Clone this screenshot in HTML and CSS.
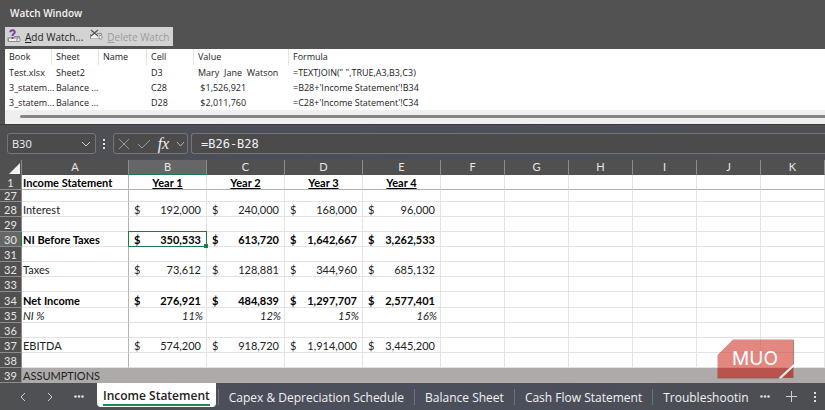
FILE: index.html
```html
<!DOCTYPE html>
<html lang="en">

<head>
  <meta charset="UTF-8" />
  <meta name="viewport" content="width=device-width, initial-scale=1.0" />
  <title>Income Statement</title>
  <link rel="stylesheet" href="styles.css">
</head>

<body>
  <section class="watch-window">
    <h1>Watch Window</h1>

    <div class="watch-toolbar">
      <button type="button" class="tool-button">
        <svg class="tool-icon" width="15" height="14" viewBox="0 0 15 14" fill="none">
          <path d="M1 8.500V12.500H10M7 7.500H12.500V9" stroke="#8a8a8a" />
          <rect x="1.500" y="9" width="9" height="3.500" fill="#f0f0f0" stroke="#8a8a8a" />
          <rect x="10" y="9" width="3" height="3.500" rx="1" fill="#f0f0f0" stroke="#8a8a8a" />
          <path d="M3.300 3.200C3.300 1.600 4.400 1.200 5.500 1.200C6.800 1.200 7.700 2 7.700 3.200C7.700 4.800 5.500 5 5.500 7" stroke="#7c3fa0" stroke-width="2" />
          <rect x="4.500" y="8" width="2" height="2" fill="#7c3fa0" />
        </svg>
        <span><u>A</u>dd Watch...</span>
      </button>
      <button type="button" class="tool-button" disabled>
        <svg class="tool-icon" width="15" height="14" viewBox="0 0 15 14" fill="none">
          <path d="M1.500 5V9.500H10M8 4.500H12.500V6" stroke="#8a8a8a" />
          <rect x="2" y="6" width="8" height="3.500" fill="#eee" />
          <rect x="10" y="6.500" width="3" height="3.500" rx="1" fill="#eee" stroke="#8a8a8a" />
          <path d="M2 1L9 7M9 1L2 7" stroke="#555" stroke-width="1.200" />
        </svg>
        <span><u>D</u>elete Watch</span>
      </button>
    </div>

    <div class="watch-list">
      <table class="watch-table">
        <colgroup>
          <col class="w-book">
          <col class="w-book">
          <col class="w-cell">
          <col class="w-book">
          <col class="w-value">
          <col>
        </colgroup>
        <thead>
          <tr>
            <th>Book</th>
            <th>Sheet</th>
            <th>Name</th>
            <th>Cell</th>
            <th>Value</th>
            <th>Formula</th>
          </tr>
        </thead>
        <tbody>
          <tr>
            <td>Test.xlsx</td>
            <td>Sheet2</td>
            <td></td>
            <td>D3</td>
            <td>Mary&nbsp; Jane&nbsp; Watson</td>
            <td>=TEXTJOIN(" ",TRUE,A3,B3,C3)</td>
          </tr>
          <tr>
            <td>3_statem...</td>
            <td>Balance ...</td>
            <td></td>
            <td>C28</td>
            <td>&nbsp;$1,526,921</td>
            <td>=B28+'Income Statement'!B34</td>
          </tr>
          <tr>
            <td>3_statem...</td>
            <td>Balance ...</td>
            <td></td>
            <td>D28</td>
            <td>&nbsp;$2,011,760</td>
            <td>=C28+'Income Statement'!C34</td>
          </tr>
        </tbody>
      </table>
      <div class="scrollbar"><div class="scroll-thumb"></div></div>
    </div>
  </section>

  <div class="formula-bar">
    <div class="name-box">
      <input type="text" class="name-input" value="B30" aria-label="Name box">
      <button type="button" class="icon-button" aria-label="Show names">
        <svg width="10" height="6" viewBox="0 0 10 6" fill="none" stroke="#d0d0d0"><path d="M1 1L5 5L9 1" /></svg>
      </button>
    </div>
    <svg class="grip" width="3" height="11" viewBox="0 0 3 11" fill="#e0e0e0">
      <rect x="0" y="1" width="2" height="2" /><rect x="0" y="5" width="2" height="2" /><rect x="0" y="9" width="2" height="2" />
    </svg>
    <div class="fx-box">
      <button type="button" class="icon-button" aria-label="Cancel">
        <svg width="12" height="12" viewBox="0 0 12 12" fill="none" stroke="#999"><path d="M1 1L11 11M11 1L1 11" /></svg>
      </button>
      <button type="button" class="icon-button" aria-label="Enter">
        <svg width="14" height="12" viewBox="0 0 14 12" fill="none" stroke="#999"><path d="M1 6L5 10L13 2" /></svg>
      </button>
      <button type="button" class="icon-button fx" aria-label="Insert function">fx</button>
      <button type="button" class="icon-button" aria-label="More functions">
        <svg width="9" height="6" viewBox="0 0 9 6" fill="none" stroke="#b8b8b8"><path d="M1 1L4.500 5L8 1" /></svg>
      </button>
    </div>
    <input type="text" class="formula-input" value="=B26-B28" aria-label="Formula">
  </div>

  <main class="sheet">
    <table class="grid">
      <colgroup>
        <col class="c-head">
        <col class="c-label">
        <col class="c-year">
        <col class="c-year">
        <col class="c-year">
        <col class="c-year">
        <col class="c-blank">
        <col class="c-blank">
        <col class="c-blank">
        <col class="c-blank">
        <col class="c-blank">
        <col>
      </colgroup>
      <thead>
        <tr>
          <th class="corner"><svg width="11" height="11" viewBox="0 0 11 11"><path d="M11 0V11H0Z" fill="#f2f2f2" /></svg></th>
          <th>A</th>
          <th class="active">B</th>
          <th>C</th>
          <th>D</th>
          <th>E</th>
          <th>F</th>
          <th>G</th>
          <th>H</th>
          <th>I</th>
          <th>J</th>
          <th>K</th>
        </tr>
      </thead>
      <tbody>
        <tr class="years bold">
          <th>1</th><td>Income Statement</td><td>Year 1</td><td>Year 2</td><td>Year 3</td><td>Year 4</td>
          <td></td><td></td><td></td><td></td><td></td><td></td>
        </tr>
        <tr class="cut">
          <th>27</th><td></td><td></td><td></td><td></td><td></td><td></td><td></td><td></td><td></td><td></td><td></td>
        </tr>
        <tr>
          <th>28</th><td>Interest</td>
          <td><div class="money"><span>$</span><span>192,000</span></div></td>
          <td><div class="money"><span>$</span><span>240,000</span></div></td>
          <td><div class="money"><span>$</span><span>168,000</span></div></td>
          <td><div class="money"><span>$</span><span>96,000</span></div></td>
          <td></td><td></td><td></td><td></td><td></td><td></td>
        </tr>
        <tr>
          <th>29</th><td></td><td></td><td></td><td></td><td></td><td></td><td></td><td></td><td></td><td></td><td></td>
        </tr>
        <tr class="bold">
          <th class="active">30</th><td>NI Before Taxes</td>
          <td class="selected"><div class="money"><span>$</span><span>350,533</span></div></td>
          <td><div class="money"><span>$</span><span>613,720</span></div></td>
          <td><div class="money"><span>$</span><span>1,642,667</span></div></td>
          <td><div class="money"><span>$</span><span>3,262,533</span></div></td>
          <td></td><td></td><td></td><td></td><td></td><td></td>
        </tr>
        <tr>
          <th>31</th><td></td><td></td><td></td><td></td><td></td><td></td><td></td><td></td><td></td><td></td><td></td>
        </tr>
        <tr>
          <th>32</th><td>Taxes</td>
          <td><div class="money"><span>$</span><span>73,612</span></div></td>
          <td><div class="money"><span>$</span><span>128,881</span></div></td>
          <td><div class="money"><span>$</span><span>344,960</span></div></td>
          <td><div class="money"><span>$</span><span>685,132</span></div></td>
          <td></td><td></td><td></td><td></td><td></td><td></td>
        </tr>
        <tr>
          <th>33</th><td></td><td></td><td></td><td></td><td></td><td></td><td></td><td></td><td></td><td></td><td></td>
        </tr>
        <tr class="bold tall">
          <th>34</th><td>Net Income</td>
          <td><div class="money"><span>$</span><span>276,921</span></div></td>
          <td><div class="money"><span>$</span><span>484,839</span></div></td>
          <td><div class="money"><span>$</span><span>1,297,707</span></div></td>
          <td><div class="money"><span>$</span><span>2,577,401</span></div></td>
          <td></td><td></td><td></td><td></td><td></td><td></td>
        </tr>
        <tr class="percent">
          <th>35</th><td>NI %</td><td>11%</td><td>12%</td><td>15%</td><td>16%</td>
          <td></td><td></td><td></td><td></td><td></td><td></td>
        </tr>
        <tr>
          <th>36</th><td></td><td></td><td></td><td></td><td></td><td></td><td></td><td></td><td></td><td></td><td></td>
        </tr>
        <tr>
          <th>37</th><td>EBITDA</td>
          <td><div class="money"><span>$</span><span>574,200</span></div></td>
          <td><div class="money"><span>$</span><span>918,720</span></div></td>
          <td><div class="money"><span>$</span><span>1,914,000</span></div></td>
          <td><div class="money"><span>$</span><span>3,445,200</span></div></td>
          <td></td><td></td><td></td><td></td><td></td><td></td>
        </tr>
        <tr>
          <th>38</th><td></td><td></td><td></td><td></td><td></td><td></td><td></td><td></td><td></td><td></td><td></td>
        </tr>
        <tr class="section">
          <th>39</th><td>ASSUMPTIONS</td><td></td><td></td><td></td><td></td><td></td><td></td><td></td><td></td><td></td><td></td>
        </tr>
      </tbody>
    </table>

    <svg class="watermark" width="78" height="40" viewBox="0 0 78 40">
      <path d="M16 0.500H76.500V25L61 39H0.500V16Z" fill="#d4473e" fill-opacity="0.650" />
      <path d="M76.500 28V39H65Z" fill="#b03a34" fill-opacity="0.850" />
      <path d="M0.500 29H72L61 39H0.500Z" fill="#a8322c" fill-opacity="0.400" />
      <path d="M0.500 39H61L76.500 25V1" fill="none" stroke="#7a5050" stroke-opacity="0.600" />
      <path d="M63 39L77 26" stroke="#f2eded" stroke-width="2" />
      <text x="38" y="26" text-anchor="middle" class="watermark-text">MUO</text>
    </svg>
  </main>

  <nav class="tab-bar">
    <div class="tab-nav">
      <button type="button" class="icon-button" aria-label="Previous sheet">
        <svg width="6" height="10" viewBox="0 0 6 10" fill="none" stroke="#d0d0d0"><path d="M5 1L1 5L5 9" /></svg>
      </button>
      <button type="button" class="icon-button" aria-label="Next sheet">
        <svg width="6" height="10" viewBox="0 0 6 10" fill="none" stroke="#d0d0d0"><path d="M1 1L5 5L1 9" /></svg>
      </button>
      <button type="button" class="icon-button" aria-label="All sheets">
        <svg width="10" height="3" viewBox="0 0 10 3" fill="#e0e0e0"><circle cx="1.500" cy="1.500" r="1.300" /><circle cx="5" cy="1.500" r="1.300" /><circle cx="8.500" cy="1.500" r="1.300" /></svg>
      </button>
    </div>
    <button type="button" class="tab current"><span>Income Statement</span></button>
    <button type="button" class="tab">Capex &amp; Depreciation Schedule</button>
    <button type="button" class="tab">Balance Sheet</button>
    <button type="button" class="tab">Cash Flow Statement</button>
    <button type="button" class="tab">Troubleshootin</button>
    <div class="tab-tools">
      <button type="button" class="icon-button" aria-label="More sheets">
        <svg width="10" height="3" viewBox="0 0 10 3" fill="#e0e0e0"><circle cx="1.500" cy="1.500" r="1.300" /><circle cx="5" cy="1.500" r="1.300" /><circle cx="8.500" cy="1.500" r="1.300" /></svg>
      </button>
      <button type="button" class="icon-button" aria-label="New sheet">
        <svg width="11" height="11" viewBox="0 0 11 11" fill="none" stroke="#d0d0d0"><path d="M5.500 0V11M0 5.500H11" /></svg>
      </button>
      <button type="button" class="icon-button" aria-label="Options">
        <svg width="3" height="11" viewBox="0 0 3 11" fill="#e0e0e0"><rect x="0" y="1" width="2" height="2" /><rect x="0" y="5" width="2" height="2" /><rect x="0" y="9" width="2" height="2" /></svg>
      </button>
    </div>
  </nav>
</body>

</html>
```

FILE: styles.css
```css
* {
  box-sizing: border-box;
}

body {
  margin: 0;
  min-height: 100vh;
  display: flex;
  flex-direction: column;
  overflow: hidden;
  background-color: #4b4e59;
  font-family: "Open Sans", "Segoe UI", sans-serif;
  color: #222;
}

button,
input {
  font: inherit;
  color: inherit;
  margin: 0;
  padding: 0;
  border: 0;
  background: none;
}

svg {
  display: block;
  flex-shrink: 0;
}

table {
  width: 100%;
  table-layout: fixed;
  border-collapse: separate;
  border-spacing: 0;
}

th,
td {
  padding: 0;
  font-weight: 400;
  text-align: left;
  white-space: nowrap;
}

/* Watch window */
.watch-window {
  background-color: #525252;
  padding-left: 5px;
  border-bottom: 1px solid #3a3b40;
}

.watch-window h1 {
  margin: 0;
  padding: 5px 5px 6px;
  font-size: 10px;
  line-height: 16px;
  font-weight: 600;
  color: #f4f4f4;
}

.watch-toolbar {
  display: inline-flex;
  gap: 6px;
  height: 19px;
  padding: 0 4px 0 2px;
  margin-bottom: 3px;
  background-color: #d3d3d3;
  vertical-align: top;
}

.tool-button {
  display: flex;
  align-items: center;
  gap: 3px;
  font-size: 10px;
  line-height: 20px;
}

.tool-icon {
  align-self: flex-start;
  margin-top: 2px;
}

.tool-button:disabled {
  color: #9c9c9c;
}

.watch-list {
  background-color: #fff;
}

.watch-table {
  font-size: 9px;
  line-height: 14px;
}

.watch-table .w-book {
  width: 47px;
}

.watch-table .w-cell {
  width: 48px;
}

.watch-table .w-value {
  width: 95px;
}

.watch-table th {
  height: 16px;
  padding-left: 4px;
  border-right: 1px solid #e4e4e4;
}

.watch-table th:last-child {
  border-right: 0;
}

.watch-table td {
  height: 15px;
  padding-left: 4px;
}

.scrollbar {
  height: 14px;
  padding: 5px 0 0 15px;
  background-color: #efefef;
}

.scroll-thumb {
  height: 3px;
  border-radius: 2px 0 0 2px;
  background-color: #858585;
}

/* Formula bar */
.formula-bar {
  display: flex;
  align-items: center;
  height: 35px;
  padding-left: 7px;
  padding-top: 2px;
  background: linear-gradient(90deg, #4f4f51, #4b4f5c 40%, #4f5054);
  color: #f2f2f2;
}

.name-box,
.fx-box,
.formula-input {
  height: 21px;
  border: 1px solid #757575;
  border-radius: 3px;
  background-color: #4b4b4b;
}

.name-box {
  display: flex;
  align-items: center;
  width: 89px;
  padding: 0 4px;
}

.name-input {
  flex: 1;
  min-width: 0;
  font-size: 11px;
}

.icon-button {
  display: flex;
  align-items: center;
  justify-content: center;
}

.grip {
  margin: 0 7px;
}

.fx-box {
  display: flex;
  align-items: center;
  justify-content: space-between;
  width: 75px;
  padding: 0 2px 0 4px;
}

.fx {
  font-family: "Liberation Serif", serif;
  font-size: 16px;
  font-style: italic;
  line-height: 16px;
}

.formula-input {
  flex: 1;
  min-width: 0;
  margin-left: 3px;
  padding-left: 9px;
  border-right: 0;
  border-radius: 3px 0 0 3px;
  font-family: "DejaVu Sans Mono", monospace;
  font-size: 12px;
}

/* Spreadsheet */
.sheet {
  position: relative;
  background-color: #fff;
}

.grid {
  font-family: Lato, Calibri, sans-serif;
  font-size: 11px;
  line-height: 14px;
}

.c-head {
  width: 22px;
}

.c-label {
  width: 107px;
}

.c-year {
  width: 78px;
}

.c-blank {
  width: 64px;
}

.grid th {
  height: 15px;
  background-color: #505050;
  color: #e6e6e6;
  text-align: center;
  border-right: 1px solid #8c8c8c;
  border-bottom: 1px solid #8c8c8c;
}

.grid thead th {
  border-bottom-color: #505050;
}

.grid .corner svg {
  margin: 2px 0 0 9px;
}

.grid th.active {
  background-color: #666;
}

.grid thead th.active {
  border-bottom-color: #1f7a45;
}

.grid tbody th.active {
  border-right-color: #1f7a45;
}

.grid td {
  height: 15px;
  border-right: 1px solid #e3e3e3;
  border-bottom: 1px solid #e3e3e3;
}

/* text sits on the bottom edge of the row */
.grid tbody th,
.grid tbody td {
  padding-top: 2px;
  line-height: 12px;
}

/* frozen panes */
.grid td:nth-child(2) {
  padding-left: 1px;
  border-right-color: #b5b5b5;
}

.grid .years td {
  border-bottom-color: #b0b0b0;
}

.grid .years td:nth-child(n + 3) {
  text-align: center;
  text-decoration: underline;
}

.grid .tall td {
  height: 16px;
}

.grid .cut td,
.grid .cut th {
  height: 12px;
  padding-top: 0;
  line-height: 11px;
}

.grid .bold td {
  font-weight: 700;
  color: #000;
}

.money {
  display: flex;
  justify-content: space-between;
  padding: 0 5px;
}

.percent td {
  font-style: italic;
}

.percent td:nth-child(n + 3) {
  padding-right: 3px;
  text-align: right;
}

.grid .selected {
  position: relative;
}

.selected::before {
  content: "";
  position: absolute;
  inset: -1px;
  border: 1px solid #1f7a45;
}

.selected::after {
  content: "";
  position: absolute;
  right: -2px;
  bottom: -2px;
  width: 4px;
  height: 4px;
  background-color: #1f7a45;
}

.grid .section td {
  background-color: #aeaaaa;
  border-color: #aeaaaa;
}

.watermark {
  position: absolute;
  right: 30px;
  bottom: 4px;
}

.watermark-text {
  font-family: Inter, sans-serif;
  font-size: 19px;
  fill: #fff;
}

/* Sheet tabs */
.tab-bar {
  flex: 1;
  display: flex;
  align-items: flex-start;
  background: linear-gradient(90deg, #4f5052, #4b4e5b 35%, #4b4e5b 65%, #4d4e52);
  color: #f2f2f2;
  font-size: 12px;
}

.tab-nav {
  display: flex;
  align-items: center;
  justify-content: space-between;
  width: 97px;
  height: 27px;
  padding: 0 13px 0 20px;
}

.tab {
  position: relative;
  height: 27px;
  padding: 2px 10px 0 11px;
  line-height: 24px;
  white-space: nowrap;
}

.tab + .tab::before {
  content: "";
  position: absolute;
  left: 0;
  top: 6px;
  height: 16px;
  border-left: 1px solid #6f7179;
}

.tab.current {
  height: 24px;
  margin-right: 2px;
  padding: 0 6px;
  border-radius: 0 0 4px 4px;
  background-color: #fff;
  color: #222;
  font-weight: 600;
}

.tab.current span {
  display: block;
  height: 22px;
  border-bottom: 2px solid #1f8a50;
}

.tab-tools {
  flex: 1;
  display: flex;
  align-items: center;
  justify-content: space-between;
  height: 27px;
  padding: 0 8px 0 1px;
}
```
